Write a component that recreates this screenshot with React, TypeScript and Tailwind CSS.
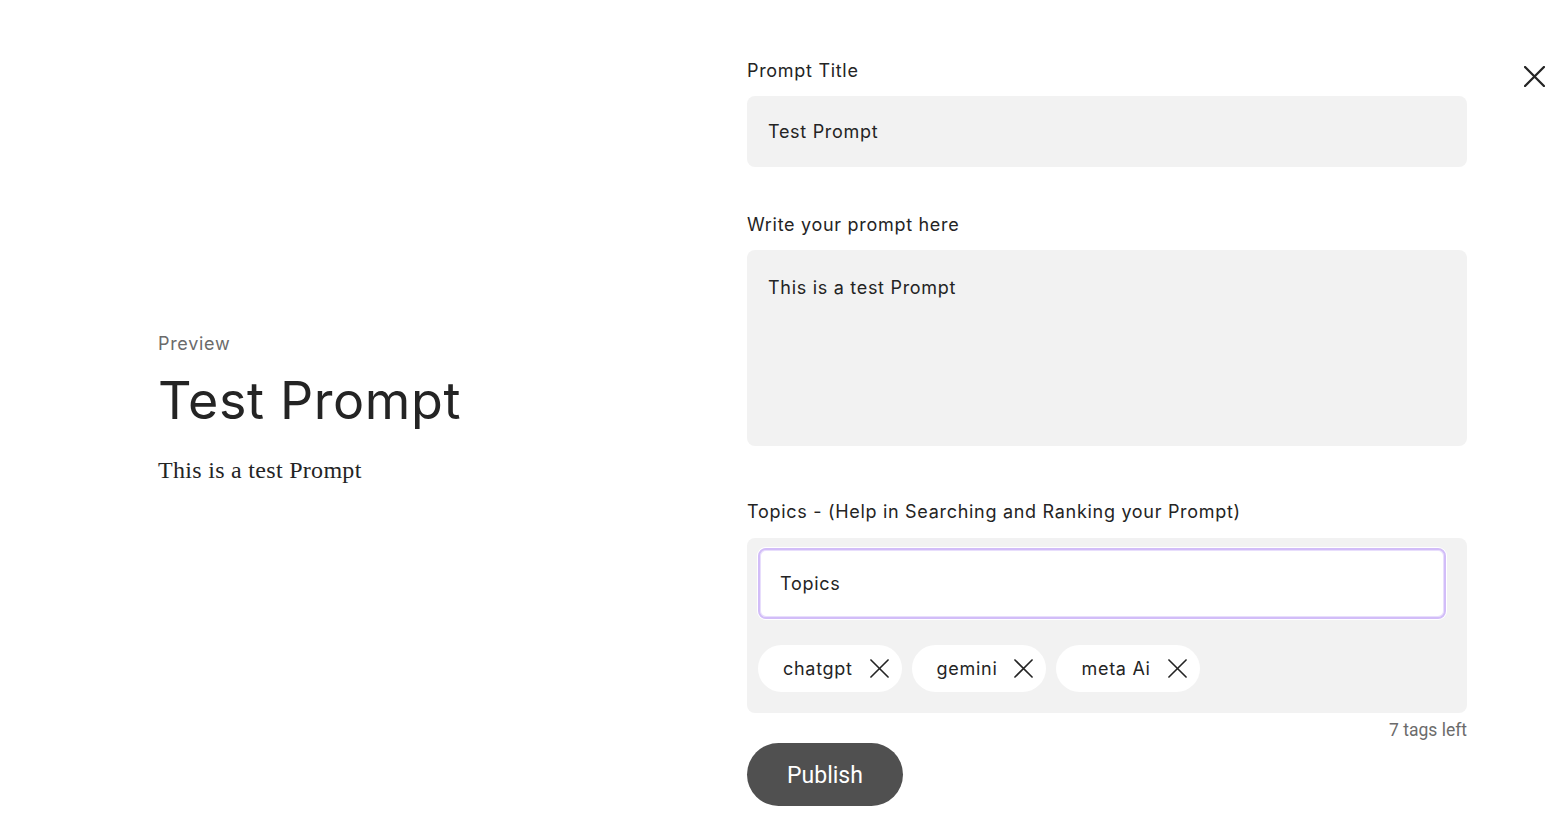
const tags = ["chatgpt", "gemini", "meta Ai"];

function FieldLabel({ children }: { children: React.ReactNode }) {
  return (
    <label className="block text-[18px] leading-7 tracking-[0.7px] text-[#242424]">
      {children}
    </label>
  );
}

function Cross({ size, stroke }: { size: number; stroke: number }) {
  return (
    <svg width={size} height={size} viewBox="0 0 20 20" fill="none">
      <path
        d="M1 1L19 19M19 1L1 19"
        stroke="currentColor"
        strokeWidth={stroke}
        strokeLinecap="round"
      />
    </svg>
  );
}

export default function App() {
  return (
    <div
      className="relative flex min-h-screen w-full bg-white text-[#242424]"
      style={{ fontFamily: "Inter, 'Noto Sans', sans-serif" }}
    >
      <button
        type="button"
        className="absolute right-[21px] top-[65px] flex h-[22px] w-[22px] items-center justify-center text-[#242424]"
      >
        <Cross size={21} stroke={2.2} />
      </button>

      <section className="flex w-[747px] shrink-0 flex-col justify-center pb-[8px] pl-[158px]">
        <p className="text-[18px] leading-7 tracking-[0.7px] text-[#6b6b6b]">Preview</p>
        <h1 className="mt-[11px] text-[52px] leading-[64px] tracking-[0.6px] text-[#242424]">
          Test Prompt
        </h1>
        <p
          className="mt-[21px] text-[24px] leading-8 tracking-[0.3px] text-[#242424]"
          style={{ fontFamily: "'Liberation Serif', serif" }}
        >
          This is a test Prompt
        </p>
      </section>

      <section className="w-[720px] shrink-0 pb-[18px] pt-[57px]">
        <FieldLabel>Prompt Title</FieldLabel>
        <div className="mt-[11px] flex h-[71px] items-center rounded-lg bg-[#f2f2f2] px-[21px] text-[18px] tracking-[0.7px]">
          Test Prompt
        </div>

        <div className="mt-[44px]">
          <FieldLabel>Write your prompt here</FieldLabel>
        </div>
        <div className="mt-[11px] h-[196px] rounded-lg bg-[#f2f2f2] px-[21px] pt-[24px] text-[18px] leading-7 tracking-[0.7px]">
          This is a test Prompt
        </div>

        <div className="mt-[52px]">
          <FieldLabel>Topics - (Help in Searching and Ranking your Prompt)</FieldLabel>
        </div>
        <div className="mt-[12px] rounded-lg bg-[#f2f2f2] pb-[21px] pl-[11px] pr-[21px] pt-[10px]">
          <div className="flex h-[71px] items-center rounded-lg border-2 border-[#d2bdf8] bg-white px-[20px] text-[18px] tracking-[0.7px] shadow-[0_0_0_1px_#ffffff,inset_0_0_0_1px_#e8defc]">
            Topics
          </div>
          <div className="mt-[26px] flex gap-[10px]">
            {tags.map((tag) => (
              <span
                key={tag}
                className="flex h-[47px] items-center gap-[17px] rounded-full bg-white pl-[25px] pr-[13px] text-[18px] tracking-[0.7px]"
              >
                {tag}
                <Cross size={19} stroke={1.7} />
              </span>
            ))}
          </div>
        </div>

        <p
          className="mt-[5px] text-right text-[17.5px] leading-6 text-[#6b6b6b]"
          style={{ fontFamily: "Roboto, sans-serif" }}
        >
          7 tags left
        </p>

        <button
          type="button"
          className="mt-[1px] h-[63px] w-[156px] rounded-full bg-[#505050] pt-[3px] text-[23px] text-white"
          style={{ fontFamily: "Roboto, sans-serif" }}
        >
          Publish
        </button>
      </section>
    </div>
  );
}
